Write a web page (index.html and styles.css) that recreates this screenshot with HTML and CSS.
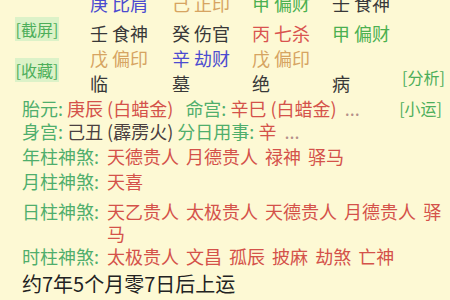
FILE: index.html
```html
<!DOCTYPE html>
<html lang="zh-CN">
<head>
<meta charset="utf-8">
<title>排盘</title>
<link rel="stylesheet" href="styles.css">
</head>
<body>
<div class="page">
  <div class="pillars">
    <div class="side side-left">
      <span class="btn">[截屏]</span>
      <span class="btn">[收藏]</span>
    </div>
    <div class="grid">
      <span class="c-blue">庚 比肩</span>
      <span class="c-tan">己 正印</span>
      <span class="c-green">甲 偏财</span>
      <span class="c-dark">壬 食神</span>

      <span class="c-dark">壬 食神</span>
      <span class="c-dark">癸 伤官</span>
      <span class="c-red">丙 七杀</span>
      <span class="c-green">甲 偏财</span>

      <span class="c-tan">戊 偏印</span>
      <span class="c-blue">辛 劫财</span>
      <span class="c-tan">戊 偏印</span>
      <span></span>

      <span class="c-dark">临</span>
      <span class="c-dark">墓</span>
      <span class="c-dark">绝</span>
      <span class="c-dark">病</span>
    </div>
    <div class="side side-right">
      <span class="link">[分析]</span>
    </div>
  </div>

  <div class="info">
    <div class="line">
      <span class="txt"><span class="lbl">胎元:</span> <span class="val">庚辰 (白蜡金)</span>&nbsp;&nbsp; <span class="lbl">命宫:</span> <span class="val">辛巳 (白蜡金)</span>&nbsp; <span class="more">...</span></span>
      <span class="link">[小运]</span>
    </div>
    <div class="line line-second">
      <span class="txt"><span class="lbl">身宫:</span> <span class="plain">己丑 (霹雳火)</span> <span class="lbl">分日用事:</span> <span class="val">辛</span>&nbsp; <span class="more">...</span></span>
    </div>
    <div class="shensha s-year">
      <span class="lbl">年柱神煞:</span>
      <span class="val">天德贵人 月德贵人 禄神 驿马</span>
    </div>
    <div class="shensha s-month">
      <span class="lbl">月柱神煞:</span>
      <span class="val">天喜</span>
    </div>
    <div class="shensha s-day">
      <span class="lbl">日柱神煞:</span>
      <span class="val">天乙贵人 太极贵人 天德贵人 月德贵人 驿马</span>
    </div>
    <div class="shensha s-hour">
      <span class="lbl">时柱神煞:</span>
      <span class="val">太极贵人 文昌 孤辰 披麻 劫煞 亡神</span>
    </div>
    <div class="dayun">约7年5个月零7日后上运</div>
  </div>
</div>
</body>
</html>
```

FILE: styles.css
```css
html, body {
  margin: 0;
  padding: 0;
  background: #fdf9d4;
}

body {
  font-family: "Noto Sans CJK SC", "Noto Sans", sans-serif;
  font-size: 18px;
  color: #333;
  overflow: hidden;
}

.page {
  width: 450px;
  height: 300px;
  overflow: hidden;
}

.pillars {
  display: flex;
  margin-top: -9px;
}

.side {
  display: flex;
  flex-direction: column;
}

.side-left {
  width: 90px;
  align-items: center;
  padding-top: 26px;
  gap: 17px;
  padding-right: 16px;
  box-sizing: border-box;
}

.btn {
  font-size: 16px;
  line-height: 24px;
  color: #4cae5a;
  background: #dcf2c8;
  padding: 0 1px;
  white-space: nowrap;
}

.grid {
  display: grid;
  grid-template-columns: 82px 80px 80px 70px;
  grid-template-rows: 30px 25px 25px 25px;
  line-height: 25px;
  white-space: nowrap;
}

.side-right {
  flex: 1;
  justify-content: flex-end;
  padding-bottom: 6px;
}

.link {
  font-size: 16px;
  color: #4cae5a;
  line-height: 25px;
  white-space: nowrap;
}

.c-blue { color: #4b4bd0; }
.c-tan { color: #d6a462; }
.c-green { color: #4cb050; }
.c-dark { color: #383838; }
.c-red { color: #d9534f; }

.info {
  padding: 1px 2px 0 22px;
}

.line {
  display: flex;
  justify-content: space-between;
  align-items: center;
  line-height: 22px;
  white-space: nowrap;
}

.line .link {
  line-height: 22px;
  margin-right: 6px;
}

.line-second {
  margin-top: 1px;
}

.lbl { color: #4fae6c; }
.val { color: #d4524a; }
.plain { color: #4a4040; }
.more { color: #b5908a; }

.shensha {
  display: flex;
  line-height: 22px;
  margin-top: 3px;
  word-spacing: 3px;
}

.shensha .lbl {
  flex: none;
  margin-right: 8px;
  word-spacing: 0;
}

.s-day {
  margin-top: 8px;
}

.s-hour {
  margin-top: 1px;
}

.dayun {
  font-size: 20px;
  line-height: 26px;
  color: #222;
  margin-top: 4px;
}
```
